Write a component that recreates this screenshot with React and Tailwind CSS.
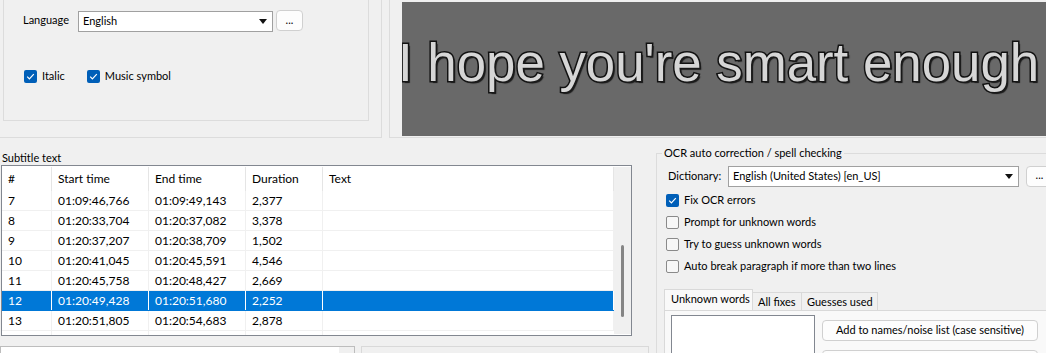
import { useState } from "react";

/*
  OCR / subtitle editor panel
  - language + image preview on top
  - subtitle grid on the left, spell-check options on the right
*/

const rows = [
  { n: 7, start: "01:09:46,766", end: "01:09:49,143", dur: "2,377" },
  { n: 8, start: "01:20:33,704", end: "01:20:37,082", dur: "3,378" },
  { n: 9, start: "01:20:37,207", end: "01:20:38,709", dur: "1,502" },
  { n: 10, start: "01:20:41,045", end: "01:20:45,591", dur: "4,546" },
  { n: 11, start: "01:20:45,758", end: "01:20:48,427", dur: "2,669" },
  { n: 12, start: "01:20:49,428", end: "01:20:51,680", dur: "2,252" },
  { n: 13, start: "01:20:51,805", end: "01:20:54,683", dur: "2,878" },
];

function CheckBox({ checked, label, onChange }) {
  return (
    <label className="flex items-center h-[17px] cursor-default select-none" onClick={onChange}>
      {checked ? (
        <span className="w-[13px] h-[13px] rounded-[2px] bg-[#005fb8] flex items-center justify-center">
          <svg width="11" height="11" viewBox="0 0 11 11">
            <path d="M2.2 5.6 L4.4 7.8 L8.8 3.2" fill="none" stroke="white" strokeWidth="1.2" />
          </svg>
        </span>
      ) : (
        <span className="w-[13px] h-[13px] rounded-[2px] border border-[#8a8a8a] bg-[#f7f7f7]" />
      )}
      <span className="ml-[5px]">{label}</span>
    </label>
  );
}

function Combo({ value, className }) {
  return (
    <div className={`h-[21px] border border-[#a0a0a0] bg-white flex items-center pl-[4px] pr-[5px] ${className}`}>
      <span className="flex-1 truncate">{value}</span>
      <svg width="8" height="5" viewBox="0 0 8 5">
        <path d="M0 0 H8 L4 5 Z" fill="#111" />
      </svg>
    </div>
  );
}

function DotsButton({ className }) {
  return (
    <button className={`h-[21px] w-[27px] rounded-[4px] border border-[#d0d0d0] bg-[#fdfdfd] flex items-center justify-center leading-none pb-[3px] ${className}`}>
      ...
    </button>
  );
}

export default function App() {
  const [italic, setItalic] = useState(true);
  const [music, setMusic] = useState(true);
  const [fixOcr, setFixOcr] = useState(true);
  const [prompt, setPrompt] = useState(false);
  const [guess, setGuess] = useState(false);
  const [autoBreak, setAutoBreak] = useState(false);
  const [selected, setSelected] = useState(12);
  const [tab, setTab] = useState("unknown");

  return (
    <div className="w-[1046px] h-[353px] overflow-hidden bg-[#f0f0f0] font-['Lato',sans-serif] text-[11px] text-black">

      {/* ===== Top: language box + image preview ===== */}
      <div className="flex h-[140px]">
        <div className="w-[382px] h-[138px] border-r border-b border-[#dcdcdc] pl-[3px]">
          <div className="w-[366px] h-[121px] border-x border-b border-[#dcdcdc] pl-[19px] pt-[10px]">
            <div className="flex items-center h-[22px]">
              <span className="w-[55px] -mt-[2px]">Language</span>
              <Combo value="English" className="w-[195px]" />
              <DotsButton className="ml-[3px] -mt-[1px]" />
            </div>
            <div className="flex mt-[36px] ml-[1px]">
              <CheckBox checked={italic} label="Italic" onChange={() => setItalic(!italic)} />
              <div className="ml-[22px]">
                <CheckBox checked={music} label="Music symbol" onChange={() => setMusic(!music)} />
              </div>
            </div>
          </div>
        </div>

        <div className="ml-[7px] flex-1 h-[138px] border-l border-b border-[#dcdcdc] pl-[12px] pt-[2px]">
          <div className="h-[134px] bg-[#696969] overflow-hidden pt-[35px]">
            <div className="-ml-[4px] whitespace-nowrap font-['Liberation_Sans',Arial,sans-serif] text-[52.8px] leading-none text-[#d6d6d6] [-webkit-text-stroke:3px_#111] [paint-order:stroke_fill] [text-shadow:2px_2px_1px_#1a1a1a]">
              I hope you're smart enough
            </div>
          </div>
        </div>
      </div>

      {/* ===== Bottom ===== */}
      <div className="flex">

        {/* ===== Subtitle grid ===== */}
        <div className="w-[656px] shrink-0">
          <div className="mt-[10px] h-[15px] leading-[15px] pl-[2px]">Subtitle text</div>

          <div className="ml-[1px] w-[631px] h-[171px] border border-[#828790] bg-white flex overflow-hidden text-[12px]">
            <div className="w-[612px]">
              <div className="flex h-[25px]">
                {[
                  ["#", "w-[50px]"],
                  ["Start time", "w-[97px]"],
                  ["End time", "w-[97px]"],
                  ["Duration", "w-[77px]"],
                ].map(([h, w]) => (
                  <div key={h} className={`${w} h-[24px] mt-[1px] pl-[6px] flex items-center border-r border-[#e5e5e5]`}>
                    {h}
                  </div>
                ))}
                <div className="w-[291px] pl-[6px] flex items-center border-r border-[#e5e5e5] h-[24px] mt-[1px]">
                  Text
                </div>
              </div>

              {rows.map((r) => {
                const sel = r.n === selected;
                const cell = sel
                  ? "h-[19px] pl-[6px] flex items-center border-r border-white"
                  : "h-[19px] pl-[6px] flex items-center border-r border-[#f0f0f0]";
                return (
                  <div
                    key={r.n}
                    onClick={() => setSelected(r.n)}
                    className={sel ? "flex h-[20px] bg-[#0078d7] text-white border-b border-[#0078d7]" : "flex h-[20px] border-b border-[#f0f0f0]"}
                  >
                    <div className={`w-[50px] ${cell}`}>{r.n}</div>
                    <div className={`w-[97px] ${cell}`}>{r.start}</div>
                    <div className={`w-[97px] ${cell}`}>{r.end}</div>
                    <div className={`w-[77px] ${cell}`}>{r.dur}</div>
                    <div className={`w-[291px] ${cell}`}></div>
                  </div>
                );
              })}
              <div className="flex h-[10px]">
                <div className="w-[50px] border-r border-[#f0f0f0]" />
                <div className="w-[97px] border-r border-[#f0f0f0]" />
                <div className="w-[97px] border-r border-[#f0f0f0]" />
                <div className="w-[77px] border-r border-[#f0f0f0]" />
              </div>
            </div>

            {/* ===== Scrollbar ===== */}
            <div className="w-[17px] bg-[#f0f0f0] mt-[1px] mb-[1px] pt-[78px] pl-[7px]">
              <div className="w-[3px] h-[72px] rounded-full bg-[#858585]" />
            </div>
          </div>

          <div className="flex mt-[10px]">
            <div className="w-[355px] h-[20px] border border-[#bdbdbd] flex">
              <div className="w-[338px] bg-white" />
            </div>
            <div className="ml-[6px] w-[288px] h-[20px] border border-[#d9d9d9]" />
          </div>
        </div>

        {/* ===== OCR auto correction group ===== */}
        <div className="flex-1 mt-[13px] h-[220px] border-l border-t border-[#dcdcdc] relative pl-[7px] pt-[11px]">
          <span className="absolute -top-[9px] left-[5px] px-[2px] bg-[#f0f0f0] leading-[15px]">
            OCR auto correction / spell checking
          </span>

          <div className="flex items-center h-[22px]">
            <span className="ml-[4px] w-[60px]">Dictionary:</span>
            <Combo value="English (United States) [en_US]" className="w-[291px]" />
            <DotsButton className="ml-[7px]" />
          </div>

          <div className="mt-[5px] ml-[2px] flex flex-col gap-[5px]">
            <CheckBox checked={fixOcr} label="Fix OCR errors" onChange={() => setFixOcr(!fixOcr)} />
            <CheckBox checked={prompt} label="Prompt for unknown words" onChange={() => setPrompt(!prompt)} />
            <CheckBox checked={guess} label="Try to guess unknown words" onChange={() => setGuess(!guess)} />
            <CheckBox checked={autoBreak} label="Auto break paragraph if more than two lines" onChange={() => setAutoBreak(!autoBreak)} />
          </div>

          {/* ===== Tabs ===== */}
          <div className="flex items-end mt-[14px] h-[21px]">
            <button
              onClick={() => setTab("unknown")}
              className="h-[21px] w-[89px] border-l border-t border-r border-[#d9d9d9] bg-[#f9f9f9] pl-[6px] text-left leading-none pb-[3px] whitespace-nowrap"
            >
              Unknown words
            </button>
            <button
              onClick={() => setTab("fixes")}
              className="h-[18px] w-[49px] border-t border-r border-[#d9d9d9] bg-[#f0f0f0] pl-[5px] text-left leading-none whitespace-nowrap"
            >
              All fixes
            </button>
            <button
              onClick={() => setTab("guesses")}
              className="h-[18px] w-[76px] border-t border-r border-[#d9d9d9] bg-[#f0f0f0] pl-[5px] text-left leading-none whitespace-nowrap"
            >
              Guesses used
            </button>
          </div>
          <div className="h-[60px] border-l border-t border-[#d9d9d9] bg-[#f9f9f9] pl-[6px] pt-[4px] flex">
            <div className="w-[144px] h-[50px] border border-[#828790] bg-white" />
            <div className="ml-[7px] mt-[5px] flex flex-col gap-[9px]">
              <button className="w-[216px] h-[21px] rounded-[4px] border border-[#d0d0d0] bg-[#fdfdfd] flex items-center justify-center">
                Add to names/noise list (case sensitive)
              </button>
              <button className="w-[216px] h-[21px] rounded-[4px] border border-[#d0d0d0] bg-[#fdfdfd]" />
            </div>
          </div>
        </div>

      </div>
    </div>
  );
}
